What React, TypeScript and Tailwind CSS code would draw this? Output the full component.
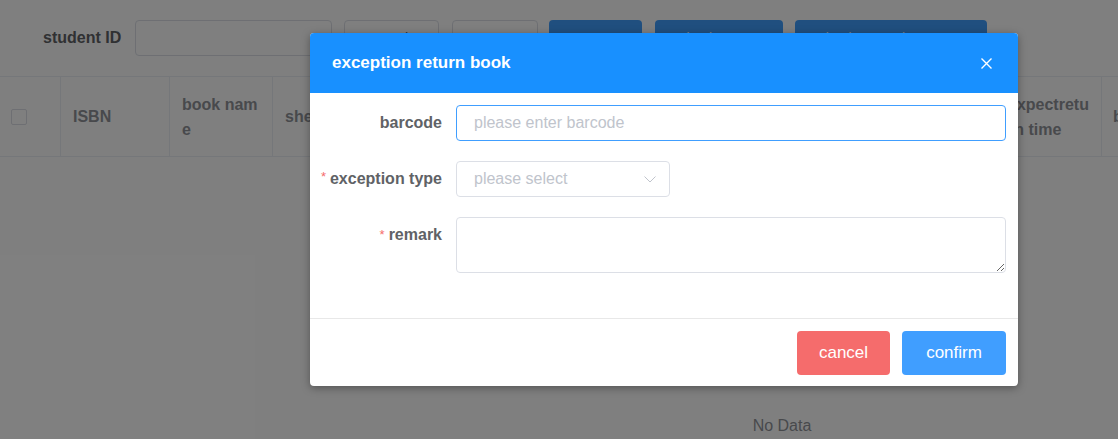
import React from "react";

export default function App() {
  const font = { fontFamily: '"Liberation Sans", Arial, sans-serif' };
  return (
    <div className="relative h-[439px] w-[1118px] overflow-hidden bg-white" style={font}>
      {/* background page */}
      <div className="flex h-[77px] items-center border-b border-[#ebeef5] pl-[43px]">
        <span className="mr-[14px] text-[16px] font-bold text-[#606266]">student ID</span>
        <div className="h-[36px] w-[197px] rounded-[4px] border border-[#dcdfe6]" />
        <div className="ml-[12px] flex h-[36px] w-[95px] items-center justify-center rounded-[4px] border border-[#dcdfe6] text-[14px] text-[#606266]">search</div>
        <div className="ml-[13px] flex h-[36px] w-[86px] items-center justify-center rounded-[4px] border border-[#dcdfe6] text-[14px] text-[#606266]">reset</div>
        <div className="ml-[11px] flex h-[36px] w-[93px] items-center justify-center rounded-[4px] bg-[#409eff] text-[14px] text-white">Borrow</div>
        <div className="ml-[13px] flex h-[36px] w-[128px] items-center justify-center rounded-[4px] bg-[#409eff] text-[14px] text-white">Check Return</div>
        <div className="ml-[12px] flex h-[36px] w-[192px] items-center justify-center rounded-[4px] bg-[#409eff] text-[14px] text-white">Check Exception Return</div>
      </div>
      <div className="w-[1564px]">
        <div className="flex h-[80px] border-b border-[#ebeef5] text-[16px] font-bold leading-[25px] text-[#909399]">
          <div className="flex w-[61px] shrink-0 items-center border-r border-[#ebeef5] pl-[11px]">
            <div className="h-[16px] w-[16px] rounded-[2px] border border-[#dcdfe6] bg-white" />
          </div>
          <div className="flex w-[109px] shrink-0 items-center border-r border-[#ebeef5] px-[12px]">ISBN</div>
          <div className="flex w-[103px] shrink-0 items-center break-all border-r border-[#ebeef5] px-[12px]">book name</div>
          <div className="flex w-[724px] shrink-0 items-center border-r border-[#ebeef5] px-[12px]">shelf number</div>
          <div className="flex w-[105px] shrink-0 items-center break-all border-r border-[#ebeef5] px-[11px]">expectreturn time</div>
          <div className="flex flex-1 items-center px-[11px]">borrow time</div>
        </div>
        <div className="flex h-[538px] items-center justify-center text-[16px] text-[#909399]">No Data</div>
      </div>

      {/* overlay */}
      <div className="absolute inset-0 bg-black/50" />

      {/* dialog */}
      <div className="absolute left-[310px] top-[33px] flex w-[708px] flex-col overflow-hidden rounded-[4px] bg-white shadow-[0_2px_8px_rgba(0,0,0,0.35)]">
        <div className="flex h-[60px] items-center justify-between bg-[#1890ff] pl-[22px] pr-[26px]">
          <span className="text-[17px] font-bold text-white">exception return book</span>
          <svg width="11" height="11" viewBox="0 0 11 11">
            <path d="M0.5 0.5 L10.5 10.5 M10.5 0.5 L0.5 10.5" stroke="white" strokeWidth="1.4" />
          </svg>
        </div>
        <div className="flex flex-col gap-[20px] pb-[45px] pl-[4px] pr-[12px] pt-[12px]">
          <div className="flex items-center">
            <div className="w-[142px] shrink-0 whitespace-nowrap pr-[14px] text-right text-[16px] font-bold text-[#606266]">barcode</div>
            <div className="flex h-[36px] flex-1 items-center rounded-[4px] border border-[#409eff] pl-[17px] text-[16px] text-[#c0c4cc]">
              please enter barcode
            </div>
          </div>
          <div className="flex items-center">
            <div className="w-[142px] shrink-0 whitespace-nowrap pr-[14px] text-right text-[16px] font-bold text-[#606266]">
              <span className="mr-[4px] align-top text-[13px] font-normal text-[#f56c6c]">*</span>exception type
            </div>
            <div className="flex h-[36px] w-[214px] items-center justify-between rounded-[4px] border border-[#dcdfe6] pl-[17px] pr-[13px] text-[16px] text-[#c0c4cc]">
              <span>please select</span>
              <svg width="12" height="7" viewBox="0 0 12 7">
                <path d="M0.5 0.5 L6 6 L11.5 0.5" stroke="#c0c4cc" strokeWidth="1" fill="none" />
              </svg>
            </div>
          </div>
          <div className="flex items-start">
            <div className="w-[142px] shrink-0 whitespace-nowrap pr-[14px] text-right text-[16px] font-bold leading-[36px] text-[#606266]">
              <span className="mr-[4px] align-top text-[13px] font-normal text-[#f56c6c]">*</span>remark
            </div>
            <textarea className="h-[56px] flex-1 rounded-[4px] border border-[#dcdfe6] outline-none" />
          </div>
        </div>
        <div className="flex h-[68px] items-center justify-end gap-[12px] border-t border-[#e8e8e8] pr-[12px] pt-[1px]">
          <div className="flex h-[44px] w-[93px] items-center justify-center rounded-[4px] bg-[#f56c6c] text-[17px] text-white">cancel</div>
          <div className="flex h-[44px] w-[104px] items-center justify-center rounded-[4px] bg-[#409eff] text-[17px] text-white">confirm</div>
        </div>
      </div>
    </div>
  );
}
